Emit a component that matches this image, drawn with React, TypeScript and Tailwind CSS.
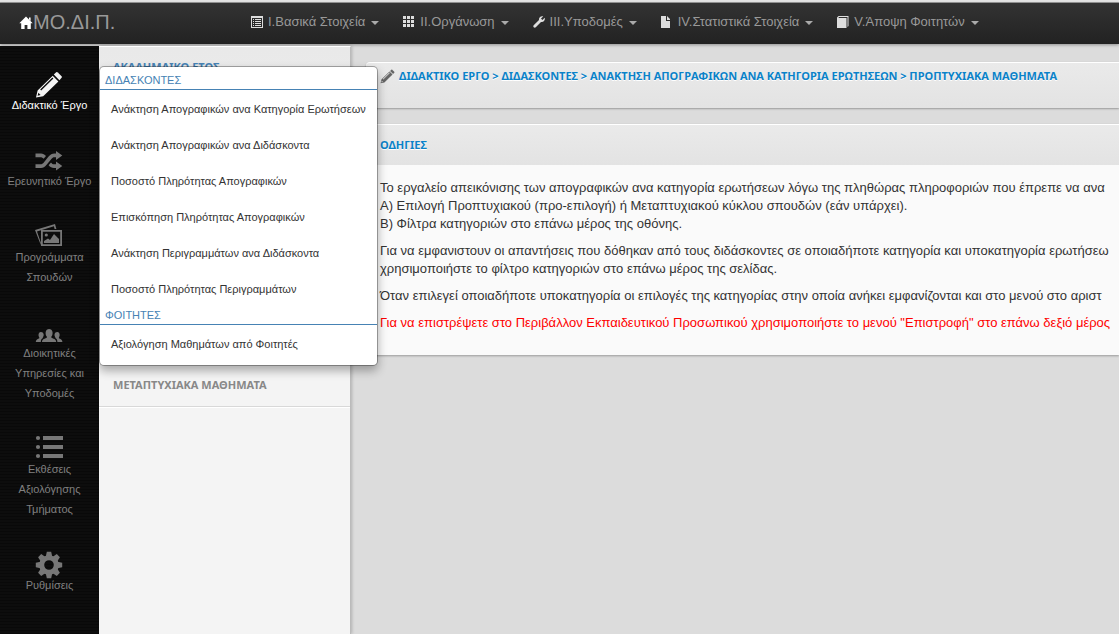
import React from "react";

const arial = "font-['Liberation_Sans',Arial,sans-serif]";
const humanist = "font-['Noto_Sans',Verdana,sans-serif]";

function HomeIcon() {
  return (
    <svg viewBox="0 0 14 14" className="mt-0.5 size-3.5 shrink-0 fill-white" aria-hidden="true">
      <path d="M7 0.5 13.7 7.2H11.8V13H8.4V9H5.6V13H2.2V7.2H0.3Z" />
      <path d="M10 1.5H11.6V5L10 3.4Z" />
    </svg>
  );
}

function PencilIcon({ className }: { className: string }) {
  return (
    <svg viewBox="0 0 28 28" className={className} aria-hidden="true">
      <path
        fillRule="evenodd"
        d="M1 26.5 2.6 19.4 17.7 4.7 23.4 10.4 8.2 25.2ZM6.2 19.5 18.4 7.6 17.4 6.6 5.2 18.5ZM2.6 24.8 5.6 24.1 3.4 21.8Z"
      />
      <path d="M18.8 3.6 21.2 1.3Q22 0.7 22.8 1.4L26.6 5.2Q27.3 6 26.6 6.8L24.4 9.2Z" />
    </svg>
  );
}

function ListIcon() {
  return (
    <svg viewBox="0 0 12 12" className="size-3 shrink-0" aria-hidden="true">
      <path
        fillRule="evenodd"
        d="M0 0H12V12H0ZM1 2V11H11V2ZM2 3H3V4H2ZM4 3H10V4H4ZM2 5H3V6H2ZM4 5H10V6H4ZM2 7H3V8H2ZM4 7H10V8H4ZM2 9H3V10H2ZM4 9H10V10H4Z"
      />
    </svg>
  );
}

function GridIcon() {
  return (
    <svg viewBox="0 0 12 12" className="size-3 shrink-0" aria-hidden="true">
      <path d="M0 0H3V3H0ZM4 0H7V3H4ZM8 0H11V3H8ZM0 4H3V7H0ZM4 4H7V7H4ZM8 4H11V7H8ZM0 8H3V11H0ZM4 8H7V11H4ZM8 8H11V11H8Z" />
    </svg>
  );
}

function WrenchIcon() {
  return (
    <svg viewBox="0 0 12 12" className="size-3 shrink-0" aria-hidden="true">
      <path d="M10.2 0.4 8 2.6 9.4 4 11.7 1.8C12.4 4.2 10.6 6.6 8 6L2.8 11.3C1.4 12.6-0.6 10.7 0.7 9.3L6 4.1C5.5 1.5 7.8-0.4 10.2 0.4Z" />
    </svg>
  );
}

function FileIcon() {
  return (
    <svg viewBox="0 0 12 12" className="size-3 shrink-0" aria-hidden="true">
      <path d="M0 0H5V5H9V12H0ZM6 0 9 3V4H6Z" />
    </svg>
  );
}

function BookIcon() {
  return (
    <svg viewBox="0 0 12 12" className="size-3 shrink-0" aria-hidden="true">
      <path d="M0 1.6 1.6 0H11.5V10L10.5 11V1H2L1.4 2H9.5V12H0Z" />
    </svg>
  );
}

function ShuffleIcon() {
  return (
    <svg viewBox="0 0 28 28" className="size-7" aria-hidden="true">
      <path d="M0.5 6.5H6C8 6.5 9.5 7.4 11 9L8.6 11.8C7.6 10.8 6.8 10.3 5.6 10.3H0.5Z" />
      <path d="M0.5 17.2H5.6C7 17.2 7.8 16.6 8.8 15.4L13.6 9.6C15.5 7.4 17 6.5 19.2 6.5H21V4L27.3 8.5 21 13V10.3H19.4C18 10.3 17.4 10.8 16.4 12L11.4 18C9.8 20 8.2 21 6 21H0.5Z" />
      <path d="M16 15.4C17 16.7 17.8 17.2 19.2 17.2H21V14.6L27.3 19 21 23.4V21H19C16.8 21 15.2 20 13.6 18.2Z" />
    </svg>
  );
}

function PictureIcon() {
  return (
    <svg viewBox="0 0 28 28" className="size-7" aria-hidden="true">
      <path d="M0 7 20 1 21.4 6H19.6L18.9 3.2 2 8.4 5.8 19.5V22Z" />
      <path fillRule="evenodd" d="M6 7H27V23H6ZM7.8 8.8V21.2H25.2V8.8Z" />
      <path d="M9 20V18L13 15.5 15 17 19 11 24 16V20Z" />
      <circle cx="11.3" cy="12" r="1.6" />
    </svg>
  );
}

function GroupIcon() {
  return (
    <svg viewBox="0 0 28 28" className="size-7" aria-hidden="true">
      <path d="M7 23C7.2 20.8 8.2 20.1 11.8 18.8V17.6C10.8 16.4 10.4 15 10.7 13 11 11 12.4 10 14.1 10S17.2 11 17.5 13C17.8 15 17.4 16.4 16.4 17.6V18.8C20 20.1 21 20.8 21.2 23Z" />
      <path d="M0.8 23C0.9 20.9 1.9 20.3 4.3 19.3V18.4C3.2 17.2 3 13.3 5.8 13 7.2 12.9 8.3 13.7 8.6 15 8.9 16.6 8.4 17.8 7.8 18.4V19.1C6.4 20 5.9 21 5.8 23Z" />
      <path d="M27.4 23C27.3 20.9 26.3 20.3 23.9 19.3V18.4C25 17.2 25.2 13.3 22.4 13 21 12.9 19.9 13.7 19.6 15 19.3 16.6 19.8 17.8 20.4 18.4V19.1C21.8 20 22.3 21 22.4 23Z" />
    </svg>
  );
}

function BulletsIcon() {
  return (
    <svg viewBox="0 0 28 28" className="size-7" aria-hidden="true">
      <path d="M8 1H28V5H8ZM8 10H28V14H8ZM8 19H28V23H8Z" />
      <circle cx="3" cy="3" r="2.1" />
      <circle cx="3" cy="12" r="2.1" />
      <circle cx="3" cy="21" r="2.1" />
    </svg>
  );
}

function GearIcon() {
  return (
    <svg viewBox="0 0 28 28" className="size-7" aria-hidden="true">
      <g transform="translate(14 14)">
        <path
          fillRule="evenodd"
          d="M0-9.8A9.8 9.8 0 1 1 0 9.8A9.8 9.8 0 1 1 0-9.8ZM0-4.8A4.8 4.8 0 1 0 0 4.8A4.8 4.8 0 1 0 0-4.8Z"
        />
        {[0, 45, 90, 135, 180, 225, 270, 315].map((angle) => (
          <path key={angle} transform={`rotate(${angle})`} d="M-3.2-8.6-2.2-13.2H2.2L3.2-8.6Z" />
        ))}
      </g>
    </svg>
  );
}

const navItems = [
  { label: "I.Βασικά Στοιχεία", icon: <ListIcon /> },
  { label: "II.Οργάνωση", icon: <GridIcon /> },
  { label: "III.Υποδομές", icon: <WrenchIcon /> },
  { label: "IV.Στατιστικά Στοιχεία", icon: <FileIcon /> },
  { label: "V.Άποψη Φοιτητών", icon: <BookIcon /> },
];

const sections = [
  { lines: ["Διδακτικό Έργο"], icon: <PencilIcon className="size-7" />, active: true },
  { lines: ["Ερευνητικό Έργο"], icon: <ShuffleIcon /> },
  { lines: ["Προγράμματα", "Σπουδών"], icon: <PictureIcon /> },
  { lines: ["Διοικητικές", "Υπηρεσίες και", "Υποδομές"], icon: <GroupIcon /> },
  { lines: ["Εκθέσεις", "Αξιολόγησης", "Τμήματος"], icon: <BulletsIcon /> },
  { lines: ["Ρυθμίσεις"], icon: <GearIcon /> },
];

const menuGroups = [
  {
    title: "ΔΙΔΑΣΚΟΝΤΕΣ",
    items: [
      "Ανάκτηση Απογραφικών ανα Κατηγορία Ερωτήσεων",
      "Ανάκτηση Απογραφικών ανα Διδάσκοντα",
      "Ποσοστό Πληρότητας Απογραφικών",
      "Επισκόπηση Πληρότητας Απογραφικών",
      "Ανάκτηση Περιγραμμάτων ανα Διδάσκοντα",
      "Ποσοστό Πληρότητας Περιγραμμάτων",
    ],
  },
  { title: "ΦΟΙΤΗΤΕΣ", items: ["Αξιολόγηση Μαθημάτων από Φοιτητές"] },
];

function TopBar() {
  return (
    <header className="mb-0.5 flex h-[41px] shrink-0 items-center bg-linear-to-b from-[#333] to-[#222] pb-1 pl-[19px] shadow-[0_1px_3px_rgba(0,0,0,0.35)]">
      <a href="#" className="flex w-[232px] items-center text-xl leading-5 text-[#999]">
        <HomeIcon />
        ΜΟ.ΔΙ.Π.
      </a>
      <nav className="flex gap-6">
        {navItems.map((item) => (
          <button
            key={item.label}
            type="button"
            className="flex items-center whitespace-nowrap fill-[#ddd] text-[13px] leading-5 text-[#999]"
          >
            {item.icon}
            <span className="mr-1.5 ml-[5px]">{item.label}</span>
            <span className="mt-0.5 border-x-4 border-t-4 border-x-transparent border-t-[#aaa]" />
          </button>
        ))}
      </nav>
    </header>
  );
}

function FlyoutMenu() {
  return (
    <div className="absolute top-2 left-full z-10 w-[279px] rounded-[5px] border border-black/30 bg-white bg-clip-padding pt-[5px] pb-[3px] text-left shadow-[0_5px_10px_rgba(0,0,0,0.3)]">
      {menuGroups.map((group) => (
        <section key={group.title}>
          <h3 className="mb-px border-b border-[#4682b4] pl-[5px] text-[11px] leading-[17px] text-[#4682b4]">
            {group.title}
          </h3>
          <ul>
            {group.items.map((item) => (
              <li key={item}>
                <a href="#" className="block pl-[11px] text-[11px] leading-9 whitespace-nowrap text-[#333]">
                  {item}
                </a>
              </li>
            ))}
          </ul>
        </section>
      ))}
    </div>
  );
}

function Sidebar() {
  return (
    <aside className="w-[99px] shrink-0 bg-[#0b0b0b] bg-[repeating-linear-gradient(0deg,#090909_0px,#090909_1px,#0d0d0d_1px,#0d0d0d_3px)] pt-3">
      <ul>
        {sections.map((section) => (
          <li key={section.lines[0]} className="relative">
            <a
              href="#"
              className={
                section.active
                  ? "flex flex-col items-center fill-[#f4f4f4] pt-[13px] pb-[19px] text-[11px] leading-5 text-white"
                  : "flex flex-col items-center fill-[#777] pt-[13px] pb-[19px] text-[11px] leading-5 text-[#808080]"
              }
            >
              <span className="mr-px -mb-1">{section.icon}</span>
              {section.lines.map((line) => (
                <span key={line} className="whitespace-nowrap">
                  {line}
                </span>
              ))}
            </a>
            {section.active && <FlyoutMenu />}
          </li>
        ))}
      </ul>
    </aside>
  );
}

function YearColumn() {
  return (
    <aside
      className={`${humanist} w-[252px] shrink-0 border-t border-r border-t-white border-r-[#bbb] bg-[#f4f4f4] text-[11px] font-bold shadow-[1px_0_3px_rgba(0,0,0,0.2)]`}
    >
      <h2 className="h-[317px] bg-linear-to-b from-[#e9e9e9] to-[#f4f4f4] pt-2.5 pl-3.5 leading-5 text-[#4682b4]">
        ΑΚΑΔΗΜΑΙΚΟ ΕΤΟΣ
      </h2>
      <a href="#" className="block border-b border-[#d8d8d8] pl-3.5 leading-[42px] text-[#888] shadow-[0_1px_0_#fff]">
        ΜΕΤΑΠΤΥΧΙΑΚΑ ΜΑΘΗΜΑΤΑ
      </a>
    </aside>
  );
}

function Content() {
  return (
    <main className="flex min-w-0 flex-1 flex-col gap-4 overflow-hidden pt-4 pl-[15px] whitespace-nowrap">
      <div className="flex h-[46px] items-start rounded-tl-sm border-t border-white bg-linear-to-b from-[#eaeaea] to-[#e3e3e3] pt-1 pl-3.5 shadow-[0_1px_2px_rgba(0,0,0,0.3)]">
        <PencilIcon className="mt-0.5 mr-1 size-[15px] shrink-0 fill-[#666]" />
        <h1 className={`${humanist} text-[11px] leading-[18px] font-bold text-[#0b82c8] [text-shadow:0_1px_0_#fff]`}>
          ΔΙΔΑΚΤΙΚΟ ΕΡΓΟ &gt; ΔΙΔΑΣΚΟΝΤΕΣ &gt; ΑΝΑΚΤΗΣΗ ΑΠΟΓΡΑΦΙΚΩΝ ΑΝΑ ΚΑΤΗΓΟΡΙΑ ΕΡΩΤΗΣΕΩΝ &gt; ΠΡΟΠΤΥΧΙΑΚΑ
          ΜΑΘΗΜΑΤΑ
        </h1>
      </div>
      <section className="bg-[#fafafa] shadow-[0_1px_2px_rgba(0,0,0,0.3)]">
        <h2
          className={`${humanist} border-t border-white bg-linear-to-b from-[#eaeaea] to-[#e3e3e3] pl-3.5 text-[11px] leading-10 font-bold text-[#0b82c8] [text-shadow:0_1px_0_#fff]`}
        >
          ΟΔΗΓΙΕΣ
        </h2>
        <div className="flex flex-col gap-[9px] pt-3.5 pb-[23px] pl-3.5 text-[13px] leading-[18px] text-[#333]">
          <p>
            Το εργαλείο απεικόνισης των απογραφικών ανα κατηγορία ερωτήσεων λόγω της πληθώρας πληροφοριών που έπρεπε να
            ανα
            <br />
            Α) Επιλογή Προπτυχιακού (προ-επιλογή) ή Μεταπτυχιακού κύκλου σπουδών (εάν υπάρχει).
            <br />
            Β) Φίλτρα κατηγοριών στο επάνω μέρος της οθόνης.
          </p>
          <p>
            Για να εμφανιστουν οι απαντήσεις που δόθηκαν από τους διδάσκοντες σε οποιαδήποτε κατηγορία και υποκατηγορία
            ερωτήσεω
            <br />
            χρησιμοποιήστε το φίλτρο κατηγοριών στο επάνω μέρος της σελίδας.
          </p>
          <p>
            Όταν επιλεγεί οποιαδήποτε υποκατηγορία οι επιλογές της κατηγορίας στην οποία ανήκει εμφανίζονται και στο
            μενού στο αριστ
          </p>
          <p className="text-[#f00]">
            Για να επιστρέψετε στο Περιβάλλον Εκπαιδευτικού Προσωπικού χρησιμοποιήστε το μενού "Επιστροφή" στο επάνω
            δεξιό μέρος
          </p>
        </div>
      </section>
    </main>
  );
}

export default function App() {
  return (
    <div className={`${arial} flex min-h-screen flex-col border-t-2 border-[#e4e4e4] bg-[#dcdcdc]`}>
      <div className="h-px shrink-0 bg-[#999]" />
      <TopBar />
      <div className="flex flex-1">
        <Sidebar />
        <YearColumn />
        <Content />
      </div>
    </div>
  );
}
